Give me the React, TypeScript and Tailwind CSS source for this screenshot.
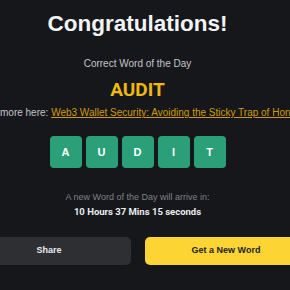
const LETTERS = ["A", "U", "D", "I", "T"];

export default function App() {
  return (
    <div className="h-[290px] w-[290px] overflow-hidden bg-[#16171b] font-['Liberation_Sans',Arial,sans-serif]">
      <div className="flex w-[275px] flex-col items-center">
        <h1 className="pt-[10px] text-[22.5px] font-bold leading-[28px] text-[#f2f3f5]">Congratulations!</h1>

        <p className="mt-[20px] text-[10px] leading-[12px] text-[#c4c5c9]">Correct Word of the Day</p>
        <p className="mt-[9px] font-['Roboto',sans-serif] text-[19px] font-bold leading-[22px] text-[#f0b90b]">AUDIT</p>

        <div className="mt-[6px] w-full">
          <p className="ml-[-26.7px] whitespace-nowrap text-[10px] leading-[12px] text-[#c4c5c9]">
            Read more here:{" "}
            <a href="#" className="text-[#d19b0c] underline">
              Web3 Wallet Security: Avoiding the Sticky Trap of Honeypot Scams
            </a>
          </p>
        </div>

        <div className="mt-[17px] flex gap-[4px]">
          {LETTERS.map((l) => (
            <span
              key={l}
              className="grid h-[32px] w-[32px] place-items-center rounded-[4px] bg-[#2a9f78] text-[11px] font-bold text-white"
            >
              {l}
            </span>
          ))}
        </div>

        <p className="mt-[23px] text-[9px] leading-[12px] text-[#7e8086]">A new Word of the Day will arrive in:</p>
        <p className="mt-[3px] font-['Roboto',sans-serif] text-[9.5px] font-bold leading-[12px] text-[#eaecef]">
          10 Hours 37 Mins 15 seconds
        </p>

        <div className="mt-[19px] flex w-full justify-center gap-[14px]">
          <button className="h-[28px] w-[163px] shrink-0 rounded-[5px] bg-[#2e2f33] text-[9px] font-bold text-[#eaecef]">
            Share
          </button>
          <button className="h-[28px] w-[163px] shrink-0 rounded-[5px] bg-[#fcd535] text-[9px] font-bold text-[#1e2026]">
            Get a New Word
          </button>
        </div>
      </div>
    </div>
  );
}
